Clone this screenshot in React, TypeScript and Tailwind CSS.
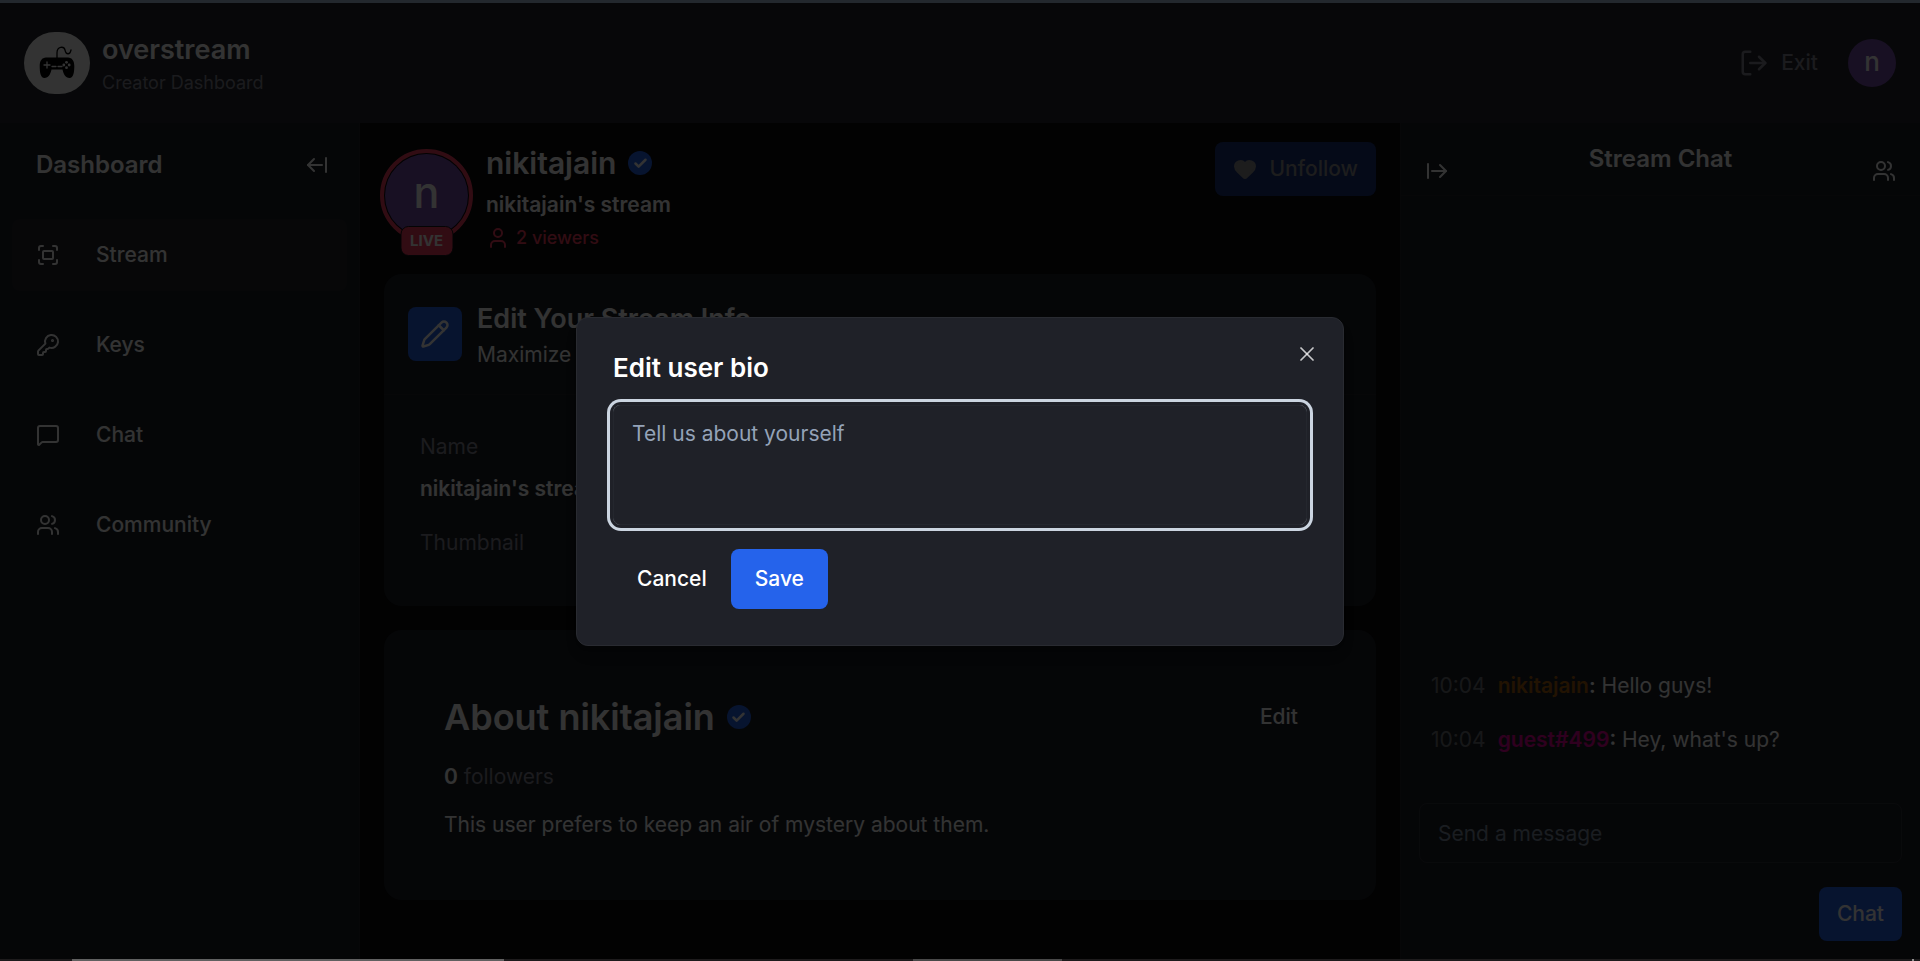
import {
  ArrowLeftFromLine,
  ArrowRightFromLine,
  Check,
  Fullscreen,
  Heart,
  KeyRound,
  LogOut,
  MessageSquare,
  Pencil,
  User,
  Users,
  X,
} from "lucide-react";
import type { LucideIcon } from "lucide-react";

const navItems: { label: string; icon: LucideIcon; active?: boolean }[] = [
  { label: "Stream", icon: Fullscreen, active: true },
  { label: "Keys", icon: KeyRound },
  { label: "Chat", icon: MessageSquare },
  { label: "Community", icon: Users },
];

const messages = [
  { time: "10:04", name: "nikitajain", color: "text-[#a85f0c]", text: "Hello guys!" },
  { time: "10:04", name: "guest#499", color: "text-[#e8009c]", text: "Hey, what's up?" },
];

function Logo() {
  return (
    <div className="flex h-[62px] w-[66px] items-center justify-center rounded-[31px] bg-white">
      <svg viewBox="0 0 36 36" className="size-9" aria-hidden="true">
        <path
          d="M18 13V8C18 1 25 1 26 5C27 10 31 10 32 5"
          fill="none"
          stroke="#000"
          strokeWidth="1.3"
          strokeLinecap="round"
        />
        <path
          d="M7 12.5H29C33 12.5 35.3 16 35.3 21C35.3 27 34.500 33 30.500 33C26.500 33 24.500 29 23.500 24.500H12.500C11.500 29 9.500 33 5.500 33C1.500 33 .7 27 .7 21C.7 16 3 12.500 7 12.500Z"
          fill="#000"
        />
        <path
          d="M8 17V23M5 20H11M13 21.500H17M19 21.500H23"
          stroke="#fff"
          strokeWidth="1.3"
          strokeLinecap="round"
        />
        <g fill="#fff">
          <circle cx="27.500" cy="17.300" r="1.400" />
          <circle cx="27.500" cy="22.700" r="1.400" />
          <circle cx="24.800" cy="20" r="1.400" />
          <circle cx="30.200" cy="20" r="1.400" />
        </g>
      </svg>
    </div>
  );
}

function Verified() {
  return (
    <span className="flex size-6 items-center justify-center rounded-full bg-[#2563eb]">
      <Check className="size-[15px]" strokeWidth={4} aria-label="Verified" />
    </span>
  );
}

function Header() {
  return (
    <header className="flex h-[120px] shrink-0 items-center justify-between bg-[#23272e] px-6">
      <a href="#" className="flex items-center gap-3">
        <Logo />
        <div className="pt-1">
          <p className="text-[27px] leading-9 font-semibold">overstream</p>
          <p className="text-lg leading-[30px] text-[#888794]">Creator Dashboard</p>
        </div>
      </a>
      <div className="flex items-center gap-[30px]">
        <a href="#" className="flex items-center gap-3 text-[21px] font-medium text-[#888794]">
          <LogOut className="size-[30px]" />
          Exit
        </a>
        <button
          aria-label="Account"
          className="flex size-12 items-center justify-center rounded-full bg-[#7a4fb0] pb-[2px] text-[26px] leading-none font-medium"
        >
          n
        </button>
      </div>
    </header>
  );
}

function Sidebar() {
  return (
    <aside className="w-[360px] shrink-0 border-r border-[#23262c] bg-[#1c2027] px-3">
      <div className="flex h-[84px] items-center justify-between pr-[18px] pl-6">
        <h2 className="text-2xl font-semibold">Dashboard</h2>
        <button aria-label="Collapse sidebar">
          <ArrowLeftFromLine className="size-6" />
        </button>
      </div>
      <nav className="flex flex-col gap-[18px] pt-3">
        {navItems.map(({ label, icon: Icon, active }) => (
          <a
            key={label}
            href="#"
            className={`flex h-[72px] items-center gap-9 rounded-lg px-6 text-[21px] font-medium ${
              active ? "bg-[#24242c]" : ""
            }`}
          >
            <Icon className="size-6" />
            {label}
          </a>
        ))}
      </nav>
    </aside>
  );
}

function StreamHeader() {
  return (
    <div className="flex items-start justify-between pr-6 pl-5">
      <div className="flex items-start gap-[13px]">
        <div className="relative mt-[7px]">
          <div className="rounded-full border-4 border-[#f43f5e] p-px">
            <div className="flex size-[83px] items-center justify-center rounded-full bg-[#7a4fb0] pb-[6px] text-[43px] leading-none font-medium">
              n
            </div>
          </div>
          <span className="absolute -bottom-[14px] left-1/2 -translate-x-1/2 rounded-lg border border-[#14141a] bg-[#f43f5e] px-[9px] py-1 text-[15px] leading-5 font-bold">
            LIVE
          </span>
        </div>
        <div>
          <div className="flex items-center gap-3">
            <h2 className="text-[30px] leading-[42px] font-semibold">nikitajain</h2>
            <Verified />
          </div>
          <p className="text-[21px] leading-[42px] font-semibold">nikitajain's stream</p>
          <p className="flex items-center gap-[6px] text-lg leading-6 font-medium text-[#f43f5e]">
            <User className="size-6" />2 viewers
          </p>
        </div>
      </div>
      <button className="flex h-[54px] items-center gap-3 rounded-lg bg-[#1b3478] px-[18px] text-[21px] font-medium text-[#8f8f92]">
        <Heart className="size-6 fill-current" />
        Unfollow
      </button>
    </div>
  );
}

function Main() {
  return (
    <main className="min-w-0 flex-1 bg-[#0a0a0b] pt-[19px]">
      <StreamHeader />
      <section className="mx-6 mt-6 h-[332px] rounded-[18px] bg-[#1c2027]">
        <div className="flex h-[121px] items-center gap-[15px] border-b border-[#23262c] px-6">
          <span className="flex size-[54px] items-center justify-center rounded-lg bg-[#2563eb]">
            <Pencil className="size-[30px]" />
          </span>
          <div className="pt-[6px]">
            <h2 className="text-[27px] leading-9 font-semibold">Edit Your Stream Info</h2>
            <p className="text-[21px] leading-9">Maximize</p>
          </div>
        </div>
        <dl className="px-9 pt-9 text-[21px]">
          <dt className="leading-8 text-[#888794]">Name</dt>
          <dd className="pt-[10px] leading-8 font-semibold">nikitajain's stream</dd>
          <dt className="pt-[22px] leading-8 text-[#888794]">Thumbnail</dt>
        </dl>
      </section>
      <section className="mx-6 mt-6 h-[270px] rounded-[18px] bg-[#1c2027] px-15 pt-15">
        <div className="flex items-center justify-between pr-[18px]">
          <div className="flex items-center gap-3">
            <h2 className="text-4xl leading-[54px] font-semibold">About nikitajain</h2>
            <Verified />
          </div>
          <button className="text-[21px] font-medium">Edit</button>
        </div>
        <p className="pt-[17px] text-[21px] leading-8 text-[#888794]">
          <span className="font-semibold text-white">0</span> followers
        </p>
        <p className="pt-4 text-[21px] leading-8">
          This user prefers to keep an air of mystery about them.
        </p>
      </section>
    </main>
  );
}

function Chat() {
  return (
    <aside className="flex w-[520px] shrink-0 flex-col border-l border-[#23262c] bg-[#1c2027]">
      <div className="flex h-[73px] items-start justify-between border-b border-[#23262c] px-6">
        <button aria-label="Collapse chat" className="pt-9">
          <ArrowRightFromLine className="size-6" />
        </button>
        <h2 className="pt-5 text-2xl font-semibold">Stream Chat</h2>
        <button aria-label="Show community" className="pt-9">
          <Users className="size-6" />
        </button>
      </div>
      <ul className="flex flex-1 flex-col justify-end gap-[22px] px-[30px] pb-[47px] text-[21px] leading-8">
        {messages.map((m) => (
          <li key={m.name} className="flex gap-3">
            <span className="text-white/40">{m.time}</span>
            <p>
              <span className="font-semibold">
                <span className={m.color}>{m.name}</span>:
              </span>{" "}
              {m.text}
            </p>
          </li>
        ))}
      </ul>
      <form className="flex flex-col items-end gap-6 px-[18px] pb-[18px]">
        <input
          aria-label="Send a message"
          placeholder="Send a message"
          className="h-[60px] w-full rounded-lg border border-[#303238] bg-transparent px-[18px] text-[21px] placeholder:text-[#8290a4]"
        />
        <button type="button" className="h-[54px] rounded-lg bg-[#2563eb] px-[18px] text-[21px] font-medium">
          Chat
        </button>
      </form>
    </aside>
  );
}

function BioDialog() {
  return (
    <div className="absolute inset-0 flex items-center justify-center bg-black/80">
      <div
        role="dialog"
        aria-modal="true"
        aria-labelledby="bio-title"
        className="relative w-[768px] rounded-xl border border-[#292b31] bg-[#1f2128] p-9 shadow-lg"
      >
        <button aria-label="Close" className="absolute top-6 right-6 text-white/75">
          <X className="size-6" strokeWidth={1.75} />
        </button>
        <h2 id="bio-title" className="text-[26px] leading-7 font-semibold">
          Edit user bio
        </h2>
        <textarea
          aria-labelledby="bio-title"
          placeholder="Tell us about yourself"
          className="mt-[23px] block h-[120px] w-full resize-none rounded-lg border border-[#24272e] bg-transparent px-[18px] py-3 text-[21px] leading-8 ring-3 ring-[#cbd5e1] ring-offset-3 ring-offset-[#1f2128] outline-none placeholder:text-[#94a3b8]"
        />
        <div className="mt-6 flex text-[21px] font-medium">
          <button className="h-[60px] px-6">Cancel</button>
          <button className="h-[60px] rounded-lg bg-[#2563eb] px-6">Save</button>
        </div>
      </div>
    </div>
  );
}

export default function App() {
  return (
    <div className="flex h-screen flex-col overflow-hidden bg-[#0a0a0b] font-[Inter,sans-serif] text-white">
      <div className="h-[3px] shrink-0 bg-[#23282e]" />
      <div className="relative flex min-h-0 flex-1 flex-col">
        <Header />
        <div className="flex min-h-0 flex-1">
          <Sidebar />
          <Main />
          <Chat />
        </div>
        <BioDialog />
      </div>
      <div className="flex h-[2px] shrink-0 bg-[#1d1b1c]">
        <div className="ml-[72px] w-[432px] bg-[#606060]" />
        <div className="ml-[409px] w-[149px] bg-[#484848]" />
        <div className="mr-[6px] ml-auto w-[2px] bg-[#909090]" />
      </div>
    </div>
  );
}
